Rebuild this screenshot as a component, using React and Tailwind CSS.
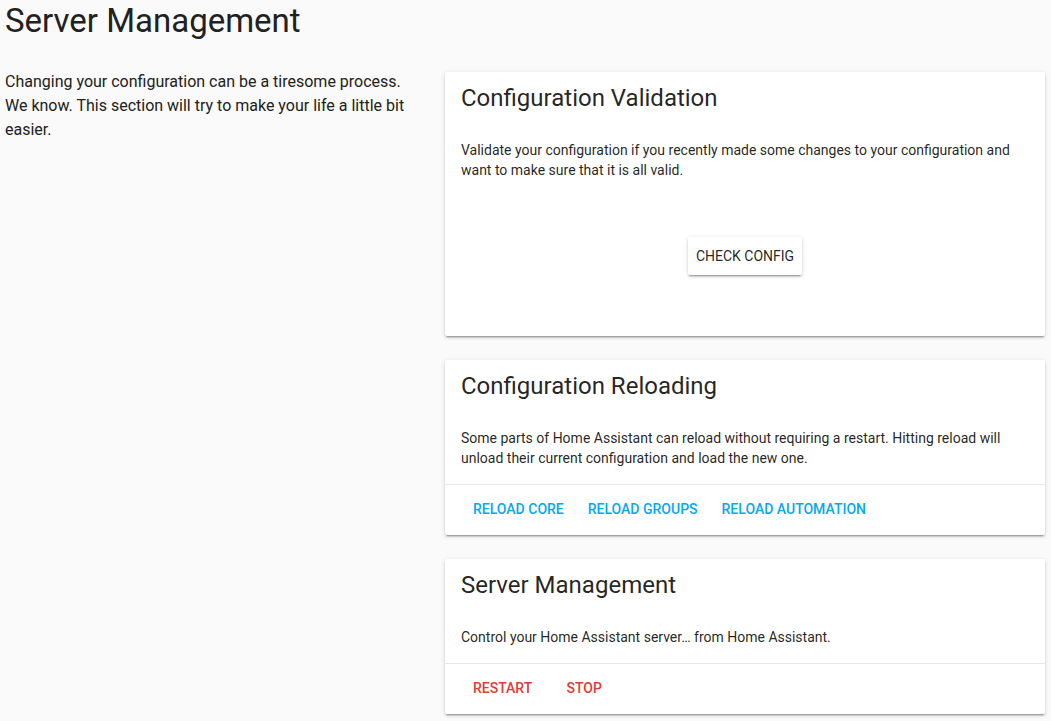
import React from "react";

const cardShadow =
  "shadow-[0_2px_2px_0_rgba(0,0,0,0.14),0_1px_5px_0_rgba(0,0,0,0.12),0_3px_1px_-2px_rgba(0,0,0,0.2)]";

function Card({ title, children }) {
  return (
    <div className={`bg-white rounded-[2px] ${cardShadow}`}>
      <div className="px-4 pt-[10px] pb-[26px] text-2xl leading-8 text-[rgba(0,0,0,0.87)]">
        {title}
      </div>
      {children}
    </div>
  );
}

function Actions({ children }) {
  return (
    <div className="border-t border-[#e8e8e8] px-4 pt-[6px] pb-[8px] flex">
      {children}
    </div>
  );
}

function FlatButton({ children, color }) {
  return (
    <button
      className={`h-9 mx-1 px-2 min-w-[72px] text-center text-sm font-medium uppercase ${color}`}
    >
      {children}
    </button>
  );
}

export default function App() {
  return (
    <div className="min-h-screen bg-[#fafafa] font-['Roboto',sans-serif] pl-[5px] pr-[6px]">
      <h1 className="text-[33px] leading-[42px] text-[#212121]">
        Server Management
      </h1>
      <div className="flex mt-[30px] gap-5">
        <p className="flex-1 -mt-[2px] text-base leading-6 text-[#212121]">
          Changing your configuration can be a tiresome process. We know. This
          section will try to make your life a little bit easier.
        </p>
        <div className="w-[600px] shrink-0 flex flex-col gap-6 pb-2">
          <Card title="Configuration Validation">
            <div className="px-4 text-sm leading-5 text-[rgba(0,0,0,0.87)]">
              Validate your configuration if you recently made some changes to
              your configuration and want to make sure that it is all valid.
            </div>
            <div className="flex justify-center pt-[57px] pb-[61px]">
              <button
                className={`h-[38px] px-2 min-w-[72px] bg-white rounded-[2px] text-sm font-normal uppercase text-[rgba(0,0,0,0.87)] ${cardShadow}`}
              >
                Check Config
              </button>
            </div>
          </Card>
          <Card title="Configuration Reloading">
            <div className="px-4 pb-4 text-sm leading-5 text-[rgba(0,0,0,0.87)]">
              Some parts of Home Assistant can reload without requiring a
              restart. Hitting reload will unload their current configuration
              and load the new one.
            </div>
            <Actions>
              <FlatButton color="text-[#03a9f4]">Reload Core</FlatButton>
              <FlatButton color="text-[#03a9f4]">Reload Groups</FlatButton>
              <FlatButton color="text-[#03a9f4]">Reload Automation</FlatButton>
            </Actions>
          </Card>
          <Card title="Server Management">
            <div className="px-4 pb-4 text-sm leading-5 text-[rgba(0,0,0,0.87)]">
              Control your Home Assistant server… from Home Assistant.
            </div>
            <Actions>
              <FlatButton color="text-[#e53935]">Restart</FlatButton>
              <FlatButton color="text-[#e53935]">Stop</FlatButton>
            </Actions>
          </Card>
        </div>
      </div>
    </div>
  );
}
